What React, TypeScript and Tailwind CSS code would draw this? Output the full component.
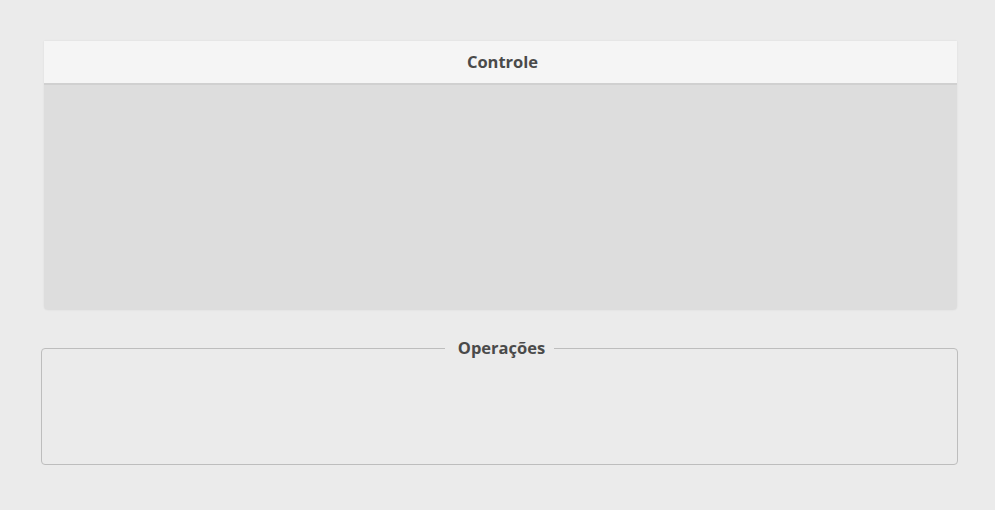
import React from 'react';

export default function App() {
  return (
    <div className="min-h-[510px] w-full bg-[#ebebeb] pt-[41px] font-['Open_Sans',sans-serif] text-[#4a4a4a]">
      {/* Controle panel */}
      <section className="ml-[44px] w-[913px] rounded-b-[4px] shadow-[0_0_2px_rgba(0,0,0,0.08)]">
        <header className="flex h-[44px] items-center justify-center border-b-2 border-[#d0d0d0] bg-[#f5f5f5] pl-[4px]">
          <h2 className="text-[16.5px] font-bold">Controle</h2>
        </header>
        <div className="h-[225px] rounded-b-[4px] bg-[#dddddd]" />
      </section>

      {/* Operações fieldset */}
      <fieldset className="ml-[41px] mt-[27px] h-[128px] w-[917px] rounded-[4px] border border-[#bdbdbd] px-0">
        <legend className="mx-auto pl-[13px] pr-[9px] text-[16.5px] font-bold leading-[22px]">Operações</legend>
      </fieldset>
    </div>
  );
}
